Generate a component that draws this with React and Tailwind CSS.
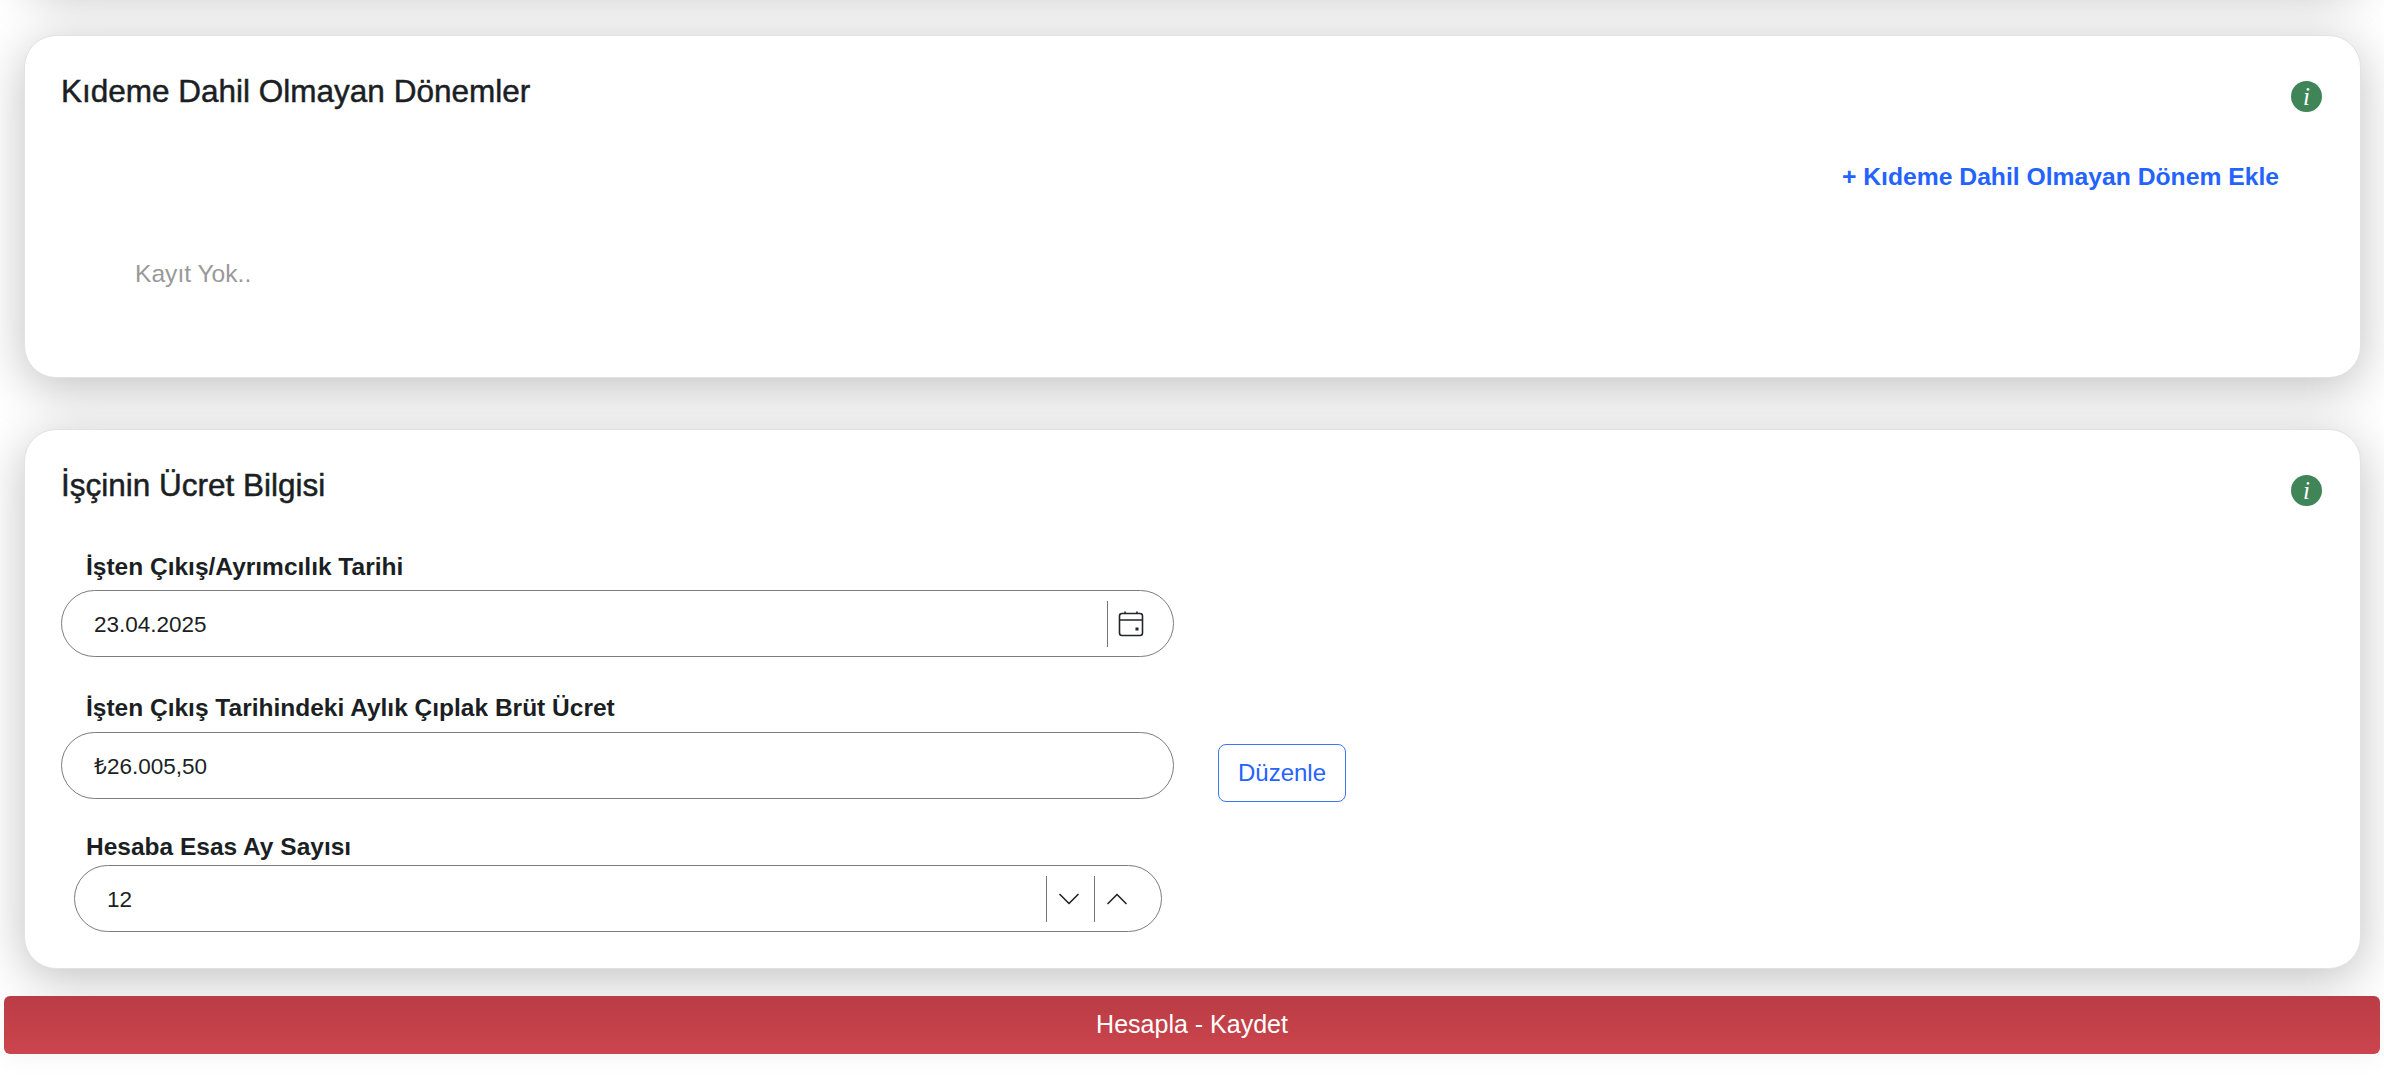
import React from 'react';
import { ChevronDown, ChevronUp } from 'lucide-react';

const font = { fontFamily: '"Liberation Sans", Arial, sans-serif' };

const InfoBadge = () => (
  <div className="absolute right-[38px] top-[45px] flex h-[31px] w-[31px] items-center justify-center rounded-full bg-[#3f8558] font-['Liberation_Serif'] text-[25px] italic leading-none text-white">
    i
  </div>
);

const Card = ({ className = '', children }) => (
  <section className={`relative ml-[24px] mr-[23px] rounded-[32px] border border-[#e2e2e2] bg-white shadow-[0_10px_50px_rgba(0,0,0,0.25)] ${className}`}>
    {children}
  </section>
);

const CalendarIcon = () => (
  <svg width="26" height="26" viewBox="0 0 26 26" fill="none" stroke="#22262a" strokeWidth="1.6">
    <rect x="1.5" y="2.5" width="23" height="22" rx="2.5" />
    <path d="M1.5 9h23M7 .5v2M19 .5v2" />
    <rect x="17.5" y="16.5" width="3" height="3" fill="#22262a" stroke="none" />
  </svg>
);

const Label = ({ children, className = '' }) => (
  <label className={`block h-[30px] text-[24.5px] font-bold leading-[30px] text-[#1b1f24] ${className}`}>
    {children}
  </label>
);

const Divider = ({ className = 'w-[1.5px]' }) => <span className={`h-[46px] shrink-0 bg-[#777] ${className}`} />;

const Pill = ({ value, className = '', children }) => (
  <div className={`flex h-[67px] items-center rounded-full border-[1.5px] border-[#7d7d7d] ${className}`}>
    <input readOnly value={value} className="min-w-0 flex-1 bg-transparent pl-[32px] pt-[2px] text-[22.5px] text-[#1b1f24] outline-none" style={font} />
    {children}
  </div>
);

export default function App() {
  return (
    <div className="h-screen overflow-hidden bg-white" style={font}>
      {/* card above the fold, only its shadow shows */}
      <Card className="mt-[-216px] h-[200px]" />

      <Card className="mt-[51px] h-[343px] pt-[35px]">
        <h2 className="ml-[36px] h-[40px] text-[31.5px] leading-[40px] text-[#1b1f24] [-webkit-text-stroke:0.5px_#1b1f24]">
          Kıdeme Dahil Olmayan Dönemler
        </h2>
        <InfoBadge />
        <div className="mr-[81px] mt-[50px] text-right text-[24.7px] font-bold leading-[32px] text-[#2563ff]">
          + Kıdeme Dahil Olmayan Dönem Ekle
        </div>
        <p className="ml-[110px] mt-[65px] text-[24.6px] leading-[32px] text-[#999]">Kayıt Yok..</p>
      </Card>

      <Card className="mt-[51px] h-[540px] pt-[35px]">
        <h2 className="ml-[36px] h-[40px] text-[31.5px] leading-[40px] text-[#1b1f24] [-webkit-text-stroke:0.5px_#1b1f24]">
          İşçinin Ücret Bilgisi
        </h2>
        <InfoBadge />

        <div className="ml-[36px] mt-[47px] w-[1113px]">
          <Label className="ml-[25px]">İşten Çıkış/Ayrımcılık Tarihi</Label>
          <Pill value="23.04.2025" className="mt-[8px]">
            <Divider className="w-px" />
            <span className="ml-[10px] mr-[29px]"><CalendarIcon /></span>
          </Pill>
        </div>

        <div className="ml-[36px] mt-[36px] flex items-start gap-[44px]">
          <div className="w-[1113px]">
            <Label className="ml-[25px]">İşten Çıkış Tarihindeki Aylık Çıplak Brüt Ücret</Label>
            <Pill value="₺26.005,50" className="mt-[9px]" />
          </div>
          <button className="-mb-[3px] mt-[51px] h-[58px] w-[128px] rounded-[8px] border-[1.5px] border-[#3b76f6] text-[24px] text-[#2563ff]">
            Düzenle
          </button>
        </div>

        <div className="ml-[49px] mt-[33px] w-[1088px]">
          <Label className="ml-[12px]">Hesaba Esas Ay Sayısı</Label>
          <Pill value="12" className="mt-[3px]">
            <Divider className="w-px" />
            <span className="flex w-[47px] justify-center pr-[3px]"><ChevronDown size={36} strokeWidth={1.1} color="#22262a" /></span>
            <Divider />
            <span className="ml-[4px] mr-[26px] flex"><ChevronUp size={36} strokeWidth={1.1} color="#22262a" /></span>
          </Pill>
        </div>
      </Card>

      <button className="relative mx-[4px] mt-[27px] block h-[58px] w-[2376px] rounded-[6px] bg-gradient-to-b from-[#ba3c44] to-[#cc454e] text-[25px] text-white shadow-[0_6px_24px_rgba(0,0,0,0.04)]">
        Hesapla - Kaydet
      </button>
    </div>
  );
}
